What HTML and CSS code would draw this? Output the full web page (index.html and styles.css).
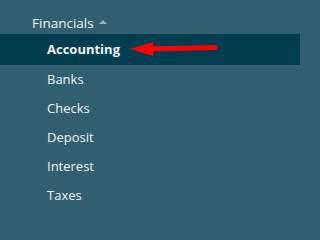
FILE: index.html
```html
<!DOCTYPE html>
<html>
<head>
<meta charset="utf-8">
<link rel="stylesheet" href="styles.css">
</head>
<body>
<nav class="menu">
  <div class="head">Financials <span class="caret"></span></div>
  <ul class="items">
    <li class="item active">Accounting</li>
    <li class="item">Banks</li>
    <li class="item">Checks</li>
    <li class="item">Deposit</li>
    <li class="item">Interest</li>
    <li class="item">Taxes</li>
  </ul>
  <svg class="arrow" width="100" height="20" viewBox="0 0 100 20">
    <line x1="20" y1="11" x2="90" y2="9.5" stroke="#ff0000" stroke-width="5" stroke-linecap="round"/>
    <polygon points="5,11 28,4 28,18" fill="#ff0000"/>
  </svg>
</nav>
</body>
</html>
```
FILE: styles.css
```css
html, body { margin: 0; padding: 0; }
body {
  width: 300px;
  height: 222px;
  background: #325f70;
  font-family: "Open Sans", "Noto Sans", sans-serif;
  color: #eef3f5;
  overflow: hidden;
}
.menu { position: relative; }
.head {
  height: 34px;
  padding-left: 32px;
  box-sizing: border-box;
  padding-top: 11px;
  font-size: 13.5px;
  line-height: 20px;
  display: flex;
  align-items: center;
  gap: 5px;
}
.caret {
  width: 0; height: 0;
  border-left: 4px solid transparent;
  border-right: 4px solid transparent;
  border-bottom: 4px solid #9fb3bc;
  margin-top: -1px;
}
.items { list-style: none; margin: 0; padding: 0; }
.item {
  height: 29px;
  line-height: 29px;
  padding-left: 47px;
  font-size: 13px;
}
.item.active {
  background: #023d50;
  font-weight: 700;
  height: 31px;
  line-height: 30px;
}
.arrow {
  position: absolute;
  left: 125px;
  top: 38px;
}
```
